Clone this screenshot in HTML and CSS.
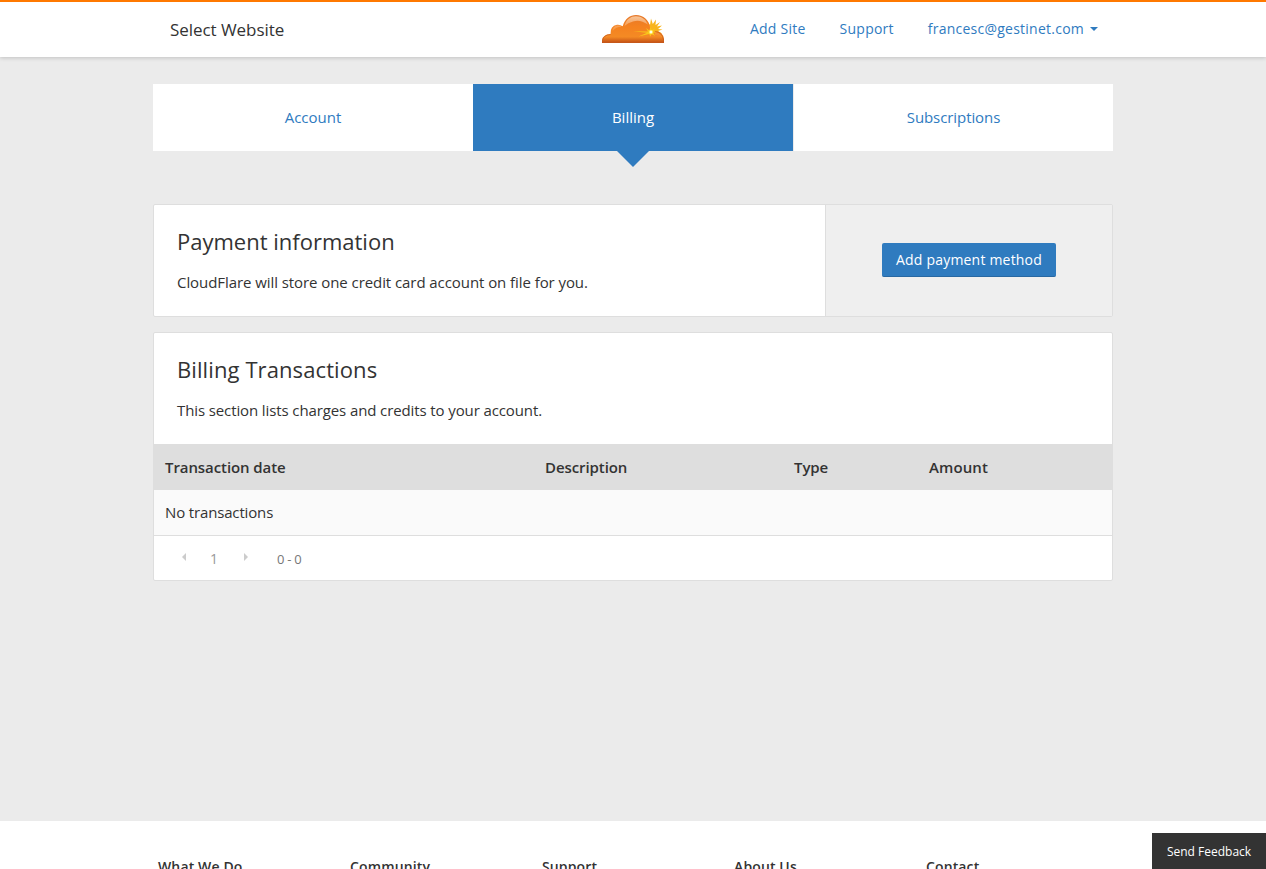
FILE: index.html
```html
<!DOCTYPE html>
<html lang="en">
<head>
<meta charset="utf-8">
<title>Billing | CloudFlare</title>
<link rel="stylesheet" href="styles.css">
</head>
<body>
<header class="header">
  <div class="header-inner">
    <a class="site-select">Select Website</a>
    <svg class="logo" viewBox="0 0 62 28" role="img" aria-label="CloudFlare">
      <defs>
        <linearGradient id="cloud" x1="0" y1="0" x2="0" y2="1"><stop offset="0" stop-color="#e5782b"/><stop offset=".4" stop-color="#f48120"/><stop offset=".78" stop-color="#f48a24"/><stop offset="1" stop-color="#c04c14"/></linearGradient>
        <linearGradient id="gloss" x1="0" y1="0" x2="0" y2="1"><stop offset="0" stop-color="#fbd3ae" stop-opacity=".85"/><stop offset="1" stop-color="#f9a355" stop-opacity=".1"/></linearGradient>
      </defs>
      <path fill="#f9b51c" d="M46 13 45 6l3 4 1-6.500L50.800 9 54 4.500 53.500 10 58 7l-3 4.500 5-1-4 3.500 4.500.5-4.500 1.500 4 2.500-11 1Z"/>
      <path fill="url(#cloud)" d="M0 28v-2.500q.5-6 8.500-6.500-.5-8 6.500-9.300 3-.4 5.700 1.600C23 3.500 28 0 34 0c7.500 0 13 5 14 12l1 4q3 1.500 4.500 0 7.500.500 8.500 8v4Z"/>
      <path fill="url(#gloss)" d="M22.500 11C24 4.500 28.500 1.200 34 1.200c5.500 0 10 3 11.800 8.300Q38 4 31 6.500q-5 1-8.500 4.500ZM10.500 16q0-4.500 4.500-5.500 3-.4 4.500 1.200-5.500 0-9 4.300ZM53 17.300q6 .2 8 5.200-4-3-8-2.500ZM2 23.500q1.500-3.200 6-3.500-2 1-6 3.500Z"/>
      <path fill="none" stroke="#c65a1c" stroke-width=".7" d="M.5 27.500h61v-3Q60 17 53 16.500M.5 27v-2q1-5 8-5.500"/>
      <path fill="#f9c51b" d="m31 16.200 15 .3-2-3.500 3.300 2.500L48.500 12l1.300 3.200 3.200-2-1.800 3.200 4 .6-4 .8 1.800 3-3.300-1.600-1.500 2.300-1-2.500L36.500 21.500l8.500-3.700Z"/>
      <circle cx="49" cy="17" r="2" fill="#ffef62"/>
      <circle cx="49" cy="17" r="1.200" fill="#fffde9"/>
    </svg>
    <nav class="user-nav">
      <a>Add Site</a>
      <a>Support</a>
      <a>francesc@gestinet.com<span class="caret"></span></a>
    </nav>
  </div>
</header>
<main class="main">
  <nav class="tabs">
    <a class="tab">Account</a>
    <a class="tab active">Billing</a>
    <a class="tab">Subscriptions</a>
  </nav>
  <section class="card payment">
    <div class="card-intro">
      <h2>Payment information</h2>
      <p>CloudFlare will store one credit card account on file for you.</p>
    </div>
    <div class="card-control"><button class="button">Add payment method</button></div>
  </section>
  <section class="card transactions">
    <div class="card-intro">
      <h2>Billing Transactions</h2>
      <p>This section lists charges and credits to your account.</p>
    </div>
    <div class="row row-head"><span>Transaction date</span><span>Description</span><span>Type</span><span>Amount</span></div>
    <div class="row row-empty"><span>No transactions</span></div>
    <div class="pager">
      <span class="arrow prev"></span><span class="page">1</span><span class="arrow next"></span><span class="range">0 - 0</span>
    </div>
  </section>
</main>
<footer class="footer">
  <div class="footer-inner">
    <h4>What We Do</h4><h4>Community</h4><h4>Support</h4><h4>About Us</h4><h4>Contact</h4>
  </div>
</footer>
<a class="feedback">Send Feedback</a>
</body>
</html>
```
FILE: styles.css
```css
* { box-sizing: border-box; }
body {
  margin: 0;
  height: 869px;
  overflow: hidden;
  display: flex;
  flex-direction: column;
  background: #ebebeb;
  color: #333;
  font: 15px/22px "Open Sans", sans-serif;
}
h2, h4, p { margin: 0; }
a { color: #2f7bbf; }
.header {
  flex: none;
  height: 57px;
  border-top: 2px solid #ff7900;
  background: #fff;
  box-shadow: 0 1px 4px rgba(0, 0, 0, .18);
}
.header-inner {
  width: 960px;
  height: 55px;
  margin: 0 auto;
  padding: 0 15px 0 17px;
  display: grid;
  grid-template-columns: 432px 62px 1fr;
}
.site-select { color: #333; font-size: 17px; line-height: 56px; letter-spacing: -.05px; }
.logo { width: 62px; height: 28px; margin-top: 13px; }
.user-nav {
  display: flex;
  justify-content: flex-end;
  gap: 34px;
  font-size: 14px;
  line-height: 54px;
  letter-spacing: .24px;
}
.caret {
  display: inline-block;
  margin-left: 6px;
  vertical-align: 3px;
  border: 4px solid transparent;
  border-top-color: #2f7bbf;
  border-bottom: 0;
}
.main { flex: none; width: 960px; height: 764px; margin: 0 auto; padding-top: 27px; }
.tabs { display: grid; grid-template-columns: repeat(3, 1fr); height: 67px; margin-bottom: 53px; background: #fff; }
.tab { text-align: center; line-height: 67px; }
.tab:last-child { letter-spacing: -.08px; border-left: 1px solid #ebebeb; }
.tab.active { position: relative; background: #2f7bbf; color: #fff; }
.tab.active::after {
  content: "";
  position: absolute;
  top: 100%;
  left: 50%;
  margin-left: -16px;
  border: 16px solid transparent;
  border-top-color: #2f7bbf;
  border-bottom: 0;
}
.card { margin-bottom: 15px; border: 1px solid #dedede; border-radius: 2px; background: #fff; }
.payment { display: grid; grid-template-columns: 671px 1fr; }
.card-intro { height: 111px; padding: 21px 23px 0; }
.card-intro p { letter-spacing: -.07px; }
.transactions p { letter-spacing: -.11px; }
h2 { font-size: 22px; line-height: 30px; font-weight: 400; margin-bottom: 15px; }
.transactions h2 { letter-spacing: .1px; }
.card-control {
  display: flex;
  justify-content: center;
  align-items: center;
  padding-bottom: 2px;
  border-left: 1px solid #dedede;
  background: #efefef;
}
.button {
  width: 174px;
  height: 34px;
  padding: 0;
  border: 0;
  border-bottom: 1px solid #2868a2;
  border-radius: 2px;
  background: #2f7bbf;
  color: #fff;
  font: 14px/33px "Open Sans", sans-serif;
  letter-spacing: .2px;
}
.row { display: grid; grid-template-columns: 380px 249px 135px 1fr; padding-left: 11px; }
.row-head { height: 46px; line-height: 47px; background: #dedede; font-weight: 600; letter-spacing: -.08px; }
.row-head span:last-child { letter-spacing: .1px; }
.row-empty { height: 46px; line-height: 45px; background: #fafafa; border-bottom: 1px solid #dedede; letter-spacing: -.15px; }
.pager { display: flex; align-items: center; height: 44px; padding-left: 28px; color: #999; font-size: 14px; }
.arrow { margin-bottom: 3px; border: 4px solid transparent; }
.prev { border-right-color: #ccc; border-left: 0; margin-right: 24px; }
.next { border-left-color: #ccc; border-right: 0; margin-left: 26px; }
.page { width: 8px; padding-top: 1px; }
.range { margin-left: 29px; padding-top: 2px; font-size: 13px; letter-spacing: -.25px; color: #777; }
.footer { flex: 1; background: #fff; }
.footer-inner { width: 960px; margin: 0 auto; padding: 35px 0 0 5px; display: grid; grid-template-columns: repeat(5, 192px); }
h4 { font-size: 14px; line-height: 22px; font-weight: 600; letter-spacing: .13px; }
.feedback {
  position: fixed;
  right: 0;
  bottom: 0;
  width: 114px;
  height: 36px;
  background: #333;
  color: #fff;
  font-size: 12px;
  line-height: 37px;
  text-align: center;
}
```
